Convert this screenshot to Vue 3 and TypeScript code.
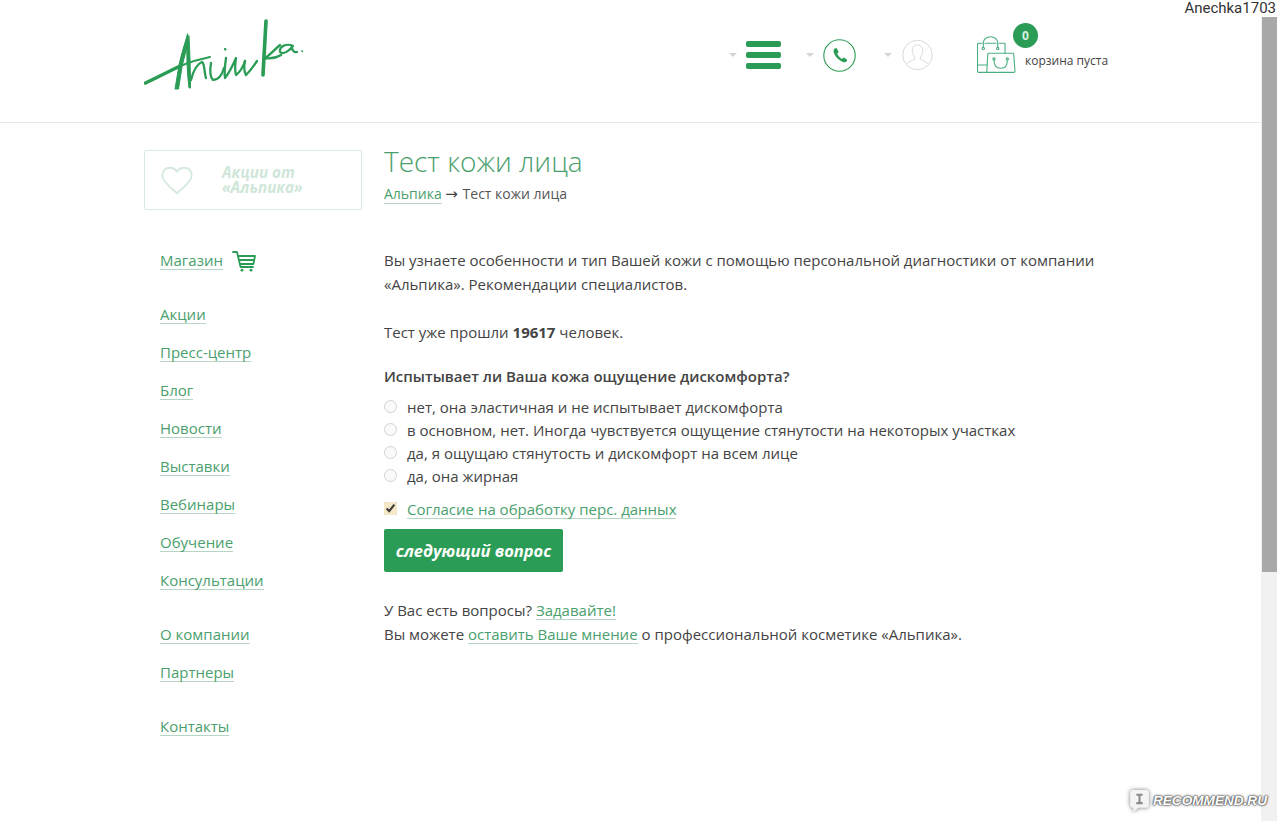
<script setup lang="ts">
const sideGroups: string[][] = [
  ["Акции", "Пресс-центр", "Блог", "Новости", "Выставки", "Вебинары", "Обучение", "Консультации"],
  ["О компании", "Партнеры"],
  ["Контакты"],
];

const answers = [
  "нет, она эластичная и не испытывает дискомфорта",
  "в основном, нет. Иногда чувствуется ощущение стянутости на некоторых участках",
  "да, я ощущаю стянутость и дискомфорт на всем лице",
  "да, она жирная",
];
</script>

<template>
  <div class="page">
    <div class="site">
      <header class="top">
        <div class="top-inner">
          <svg class="logo" width="162" height="76" viewBox="0 0 162 76" fill="none" stroke="#2a9c55" stroke-linecap="round" stroke-linejoin="round">
            <path d="M1.5 66 C14 60 26 54 36 49" stroke-width="3.6" />
            <path d="M36 49 C46 45 56 42 66 40" stroke-width="2" />
            <path d="M43.5 17 C41 26 37 38 35 48 L31 72 L34.5 72 L38 50 C40 40 43 32 44.5 24 Z" fill="#2a9c55" stroke-width="1" />
            <path d="M43 22 C42.5 38 43 56 45 71 L46.5 71 C46.5 55 46 38 45 19 Z" fill="#2a9c55" stroke-width="1" />
            <path d="M47 63 C49 55 53 47 58 45 C61 47 60 56 62 61" stroke-width="2.3" />
            <path d="M67 46 C66 52 66 60 69 63 C74 63 78 58 80 51" stroke-width="2.3" />
            <path d="M81 32 L81.4 32.4" stroke-width="2.4" />
            <path d="M82 41 C81 48 80 55 81 61 C85 56 89 48 92 41 C91 48 91 55 92 58 C96 55 99 50 101 44" stroke-width="2.3" />
            <path d="M101 44 C100 49 100 55 102 58 C105 55 109 50 113 44" stroke-width="2.3" />
            <path d="M122 4 C121 20 120 40 119 58" stroke-width="3.6" />
            <path d="M120 42 C126 38 130 33 136 28" stroke-width="2.4" />
            <path d="M120 41 C126 42 132 41 137 38" stroke-width="2.4" />
            <path d="M149 29 C143 26 135 29 136 35 C139 38 145 34 148 30 C148 33 150 36 153 35" stroke-width="2.2" />
            <path d="M158 34 L158.4 34.3" stroke-width="1.6" />
          </svg>

          <div class="tools">
            <span class="caret"></span>
            <svg class="burger" width="35" height="28" viewBox="0 0 35 28" fill="#2a9c55">
              <rect y="0" width="35" height="6" rx="2" />
              <rect y="11" width="35" height="6" rx="2" />
              <rect y="22" width="35" height="6" rx="2" />
            </svg>
            <span class="caret c2"></span>
            <svg class="phone" width="33" height="33" viewBox="0 0 33 33">
              <circle cx="16.5" cy="16.5" r="15.7" fill="none" stroke="#2a9c55" stroke-width="1.1" />
              <path d="M12.4 9.2 C11.2 9.8 10.3 10.9 10.6 12.8 C11.2 16.6 16 22 20.6 23.2 C22.4 23.6 23.6 22.7 24 21.5 C24.2 21 24 20.6 23.6 20.3 L21.2 18.8 C20.8 18.6 20.3 18.6 20 19 L19 20 C17 19 15 16.8 14.2 14.6 L15.3 13.6 C15.6 13.2 15.7 12.8 15.5 12.4 L13.8 9.6 C13.5 9.1 12.9 9 12.4 9.2 Z" fill="#2a9c55" />
            </svg>
            <span class="caret c3"></span>
            <svg class="user" width="31" height="32" viewBox="0 0 32 33" fill="none" stroke="#d8d8d8" stroke-width="1">
              <circle cx="16" cy="16.5" r="15.2" />
              <path d="M4.5 26.5 C6 23.5 10 22.5 13.2 21 L13.2 18.9 C11.6 17 10.6 14.5 10.6 11.9 C10.6 8.3 12.8 6 16 6 C19.2 6 21.4 8.3 21.4 11.9 C21.4 14.5 20.4 17 18.8 18.9 L18.8 21 C22 22.5 26 23.5 27.5 26.5" />
            </svg>
            <div class="cart">
              <svg class="bags" width="39" height="38" viewBox="0 0 39 38" fill="none" stroke="#4bae80" stroke-width="1.1" stroke-linecap="round" stroke-linejoin="round">
                <path d="M5 7.3 H1.5 C0.8 7.3 0.5 7.7 0.5 8.3 V35.3 C0.5 36 0.9 36.4 1.5 36.4 H9.7" />
                <path d="M22 7.3 H28 V17.3" />
                <path d="M8 7.3 H19" />
                <path d="M6.3 11.4 V7 C6.3 3.4 9.4 0.7 13.5 0.7 C17.6 0.7 20.7 3.4 20.7 7 V11.4" />
                <circle cx="6.3" cy="12.6" r="1.2" />
                <circle cx="20.7" cy="12.6" r="1.2" />
                <path d="M0.5 29 H10.4" />
                <path d="M11.6 17.3 H36 C36.4 17.3 36.7 17.6 36.7 18 L38 35.2 C38 36 37.6 36.4 36.8 36.4 H10.8 C10.2 36.4 9.8 36 9.8 35.4 L10.8 18 C10.8 17.6 11.2 17.3 11.6 17.3 Z" />
                <circle cx="17" cy="23" r="1.1" />
                <circle cx="30.3" cy="23" r="1.1" />
                <path d="M17 24.2 C17 29.6 19.6 32.3 23.7 32.3 C27.8 32.3 30.3 29.6 30.3 24.2" />
              </svg>
              <span class="badge">0</span>
              <span class="cart-text">корзина пуста</span>
            </div>
          </div>
        </div>
      </header>

      <div class="body">
        <aside class="side">
          <a class="promo">
            <svg width="32" height="29" viewBox="0 0 34 30" fill="none" stroke="#d5e9dd" stroke-width="2" stroke-linejoin="round">
              <path d="M17 28.5 C12 24 2 17 1.4 10 C1 4.8 5 1.4 9.4 1.4 C12.6 1.4 15.4 3 17 5.6 C18.6 3 21.4 1.4 24.6 1.4 C29 1.4 33 4.8 32.6 10 C32 17 22 24 17 28.5 Z" />
            </svg>
            <span class="promo-text">Акции от<br />«Альпика»</span>
          </a>

          <nav class="menu">
            <div class="shop">
              <a class="link">Магазин</a>
              <svg class="shop-cart" width="24" height="21" viewBox="0 0 24 21" fill="none" stroke="#2a9c55" stroke-width="1.8" stroke-linecap="round" stroke-linejoin="round">
                <path d="M1 1 H5 L8.6 16 H21" />
                <path d="M6.4 5 H23 L21.4 13 H8" />
                <path d="M7.4 9 H22" />
                <circle cx="10" cy="19.2" r="1.4" fill="#2a9c55" stroke="none" />
                <circle cx="19" cy="19.2" r="1.4" fill="#2a9c55" stroke="none" />
              </svg>
            </div>
            <ul v-for="(group, i) in sideGroups" :key="i" class="group">
              <li v-for="item in group" :key="item"><a class="link">{{ item }}</a></li>
            </ul>
          </nav>
        </aside>

        <main class="main">
          <h1 class="title">Тест кожи лица</h1>
          <div class="crumbs"><a class="link">Альпика</a> <span class="arrow">→</span> Тест кожи лица</div>

          <p class="intro">
            Вы узнаете особенности и тип Вашей кожи с помощью персональной диагностики от компании
            «Альпика». Рекомендации специалистов.
          </p>
          <p class="count">Тест уже прошли <b>19617</b> человек.</p>

          <h2 class="question">Испытывает ли Ваша кожа ощущение дискомфорта?</h2>
          <div class="answers">
            <label v-for="a in answers" :key="a" class="answer">
              <input type="radio" name="q" />
              <span>{{ a }}</span>
            </label>
          </div>

          <div class="agree">
            <input type="checkbox" checked />
            <a class="link">Согласие на обработку перс. данных</a>
          </div>

          <button class="next">следующий вопрос</button>

          <p class="outro">
            У Вас есть вопросы? <a class="link">Задавайте!</a><br />
            Вы можете <a class="link">оставить Ваше мнение</a> о профессиональной косметике «Альпика».
          </p>
        </main>
      </div>
    </div>

    <div class="scrollbar"><div class="thumb"></div></div>
    <div class="nick">Anechka1703</div>
    <div class="mark">
      <svg class="bubble" width="21" height="24" viewBox="0 0 20 23">
        <path d="M4 1 H16 C18 1 19 2 19 4 V15 C19 17 18 18 16 18 H9 L4 22 V18 C2 18 1 17 1 15 V4 C1 2 2 1 4 1 Z" fill="#f4f4f4" />
        <path d="M7 5.5 H13 M10 5.5 V13.5 M7 13.5 H13" stroke="#8a8a8a" stroke-width="2" fill="none" />
      </svg>
      <span>RECOMMEND.RU</span>
    </div>
  </div>
</template>

<style>
html,
body {
  margin: 0;
  overflow: hidden;
}
</style>

<style scoped>
.page {
  position: relative;
  width: 1277px;
  height: 821px;
  overflow: hidden;
  background: #fff;
  color: #444;
  font-family: "Open Sans", "Noto Sans", sans-serif;
  font-size: 15px;
  line-height: 24px;
}

.top {
  height: 122px;
  border-bottom: 1px solid #e8e8e8;
}

.top-inner {
  display: flex;
  justify-content: space-between;
  width: 964px;
  margin-left: 144px;
}

.logo {
  margin-top: 17px;
}

.tools {
  display: flex;
  align-items: flex-start;
  height: 90px;
}

.caret {
  width: 0;
  height: 0;
  margin: 53px 9px 0 0;
  border: 4px solid transparent;
  border-top-color: #d4d4d4;
  border-bottom: 0;
}

.burger {
  margin-top: 41px;
}

.c2 {
  margin-left: 25px;
}

.phone {
  margin-top: 39px;
}

.c3 {
  margin-left: 28px;
}

.user {
  margin-top: 39px;
  margin-left: 1px;
}

.cart {
  position: relative;
  width: 131px;
  margin-left: 44px;
  height: 90px;
}

.bags {
  position: absolute;
  left: 0;
  top: 36px;
}

.badge {
  position: absolute;
  left: 36px;
  top: 23px;
  width: 25px;
  height: 25px;
  border-radius: 50%;
  background: #2a9c55;
  color: #d8f0e0;
  font-size: 12px;
  font-weight: 700;
  line-height: 25px;
  text-align: center;
}

.cart-text {
  position: absolute;
  left: 48px;
  top: 52px;
  font-size: 12px;
  line-height: 18px;
  white-space: nowrap;
}

.body {
  display: flex;
  width: 964px;
  margin-left: 144px;
  padding-top: 27px;
}

.side {
  width: 218px;
  flex: none;
}

.promo {
  display: flex;
  align-items: center;
  box-sizing: border-box;
  height: 60px;
  padding-left: 16px;
  border: 1px solid #d9e8e0;
  border-radius: 2px;
}

.promo-text {
  margin-left: 29px;
  color: #cfe6d9;
  font-size: 15.2px;
  font-style: italic;
  font-weight: 700;
  line-height: 15px;
}

.menu {
  margin-top: 38px;
  padding-left: 16px;
}

.shop {
  display: flex;
  align-items: center;
  gap: 9px;
  height: 24px;
  margin-bottom: 30px;
}

.shop-cart {
  margin-top: 2px;
}

.group {
  margin: 0 0 30px;
  padding: 0;
  list-style: none;
}

.group li {
  height: 24px;
  margin-bottom: 14px;
}

.link {
  display: inline-block;
  color: #4aa06d;
  line-height: 18px;
  border-bottom: 1px solid #b5d6c2;
}

.main {
  width: 730px;
  margin-left: 22px;
}

.title {
  margin: -2px 0 0;
  color: #4aa06d;
  font-size: 28px;
  font-weight: 300;
  line-height: 26px;
}

.crumbs {
  margin-top: 8px;
  font-size: 14px;
  color: #555;
}

.arrow {
  margin-right: 1px;
  font-family: "DejaVu Sans", sans-serif;
  font-size: 15px;
  line-height: 1;
  color: #444;
}

.intro {
  margin: 42px 0 0;
}

.count {
  margin: 24px 0 0;
}

.question {
  margin: 20px 0 0;
  font-size: 15px;
  font-weight: 600;
  line-height: 24px;
}

.answers {
  margin-top: 7px;
}

.answer {
  display: flex;
  align-items: center;
  height: 23px;
}

.answer input,
.agree input {
  width: 13px;
  height: 13px;
  margin: -1px 10px 0 0;
  flex: none;
}

.answer input {
  appearance: none;
  box-sizing: border-box;
  border: 1px solid #d2d2d2;
  border-radius: 50%;
  background: #fafafa;
}

.agree {
  display: flex;
  align-items: center;
  margin-top: 10px;
  height: 24px;
}

.agree input {
  accent-color: #f5e8c8;
}

.next {
  display: block;
  width: 179px;
  height: 43px;
  margin-top: 8px;
  padding: 0;
  border: 0;
  border-radius: 2px;
  background: #2a9c55;
  color: #fff;
  font-family: inherit;
  font-size: 16.5px;
  font-style: italic;
  font-weight: 700;
}

.outro {
  margin: 26px 0 0;
}

.scrollbar {
  position: absolute;
  top: 0;
  right: 0;
  width: 16px;
  height: 821px;
  background: #f1f1f1;
}

.thumb {
  width: 15px;
  margin: 17px 0 0 1px;
  height: 555px;
  background: #a8a8a8;
}

.nick {
  position: absolute;
  top: 0;
  right: 0;
  padding: 0 1px 0 8px;
  background: #fff;
  color: #333;
  font-family: Roboto, sans-serif;
  font-size: 15px;
  font-weight: 400;
  line-height: 17px;
}

.mark {
  position: absolute;
  right: 10px;
  bottom: 8px;
  display: flex;
  align-items: center;
  gap: 3px;
}

.bubble {
  filter: drop-shadow(0 0 2px #777);
}

.mark span {
  color: #fff;
  font-family: "Liberation Sans", sans-serif;
  font-size: 13.6px;
  font-style: italic;
  font-weight: 700;
  text-shadow: 0 0 3px #555, 0 0 2px #555, 0 0 1px #555, 0 0 1px #555;
}
</style>
